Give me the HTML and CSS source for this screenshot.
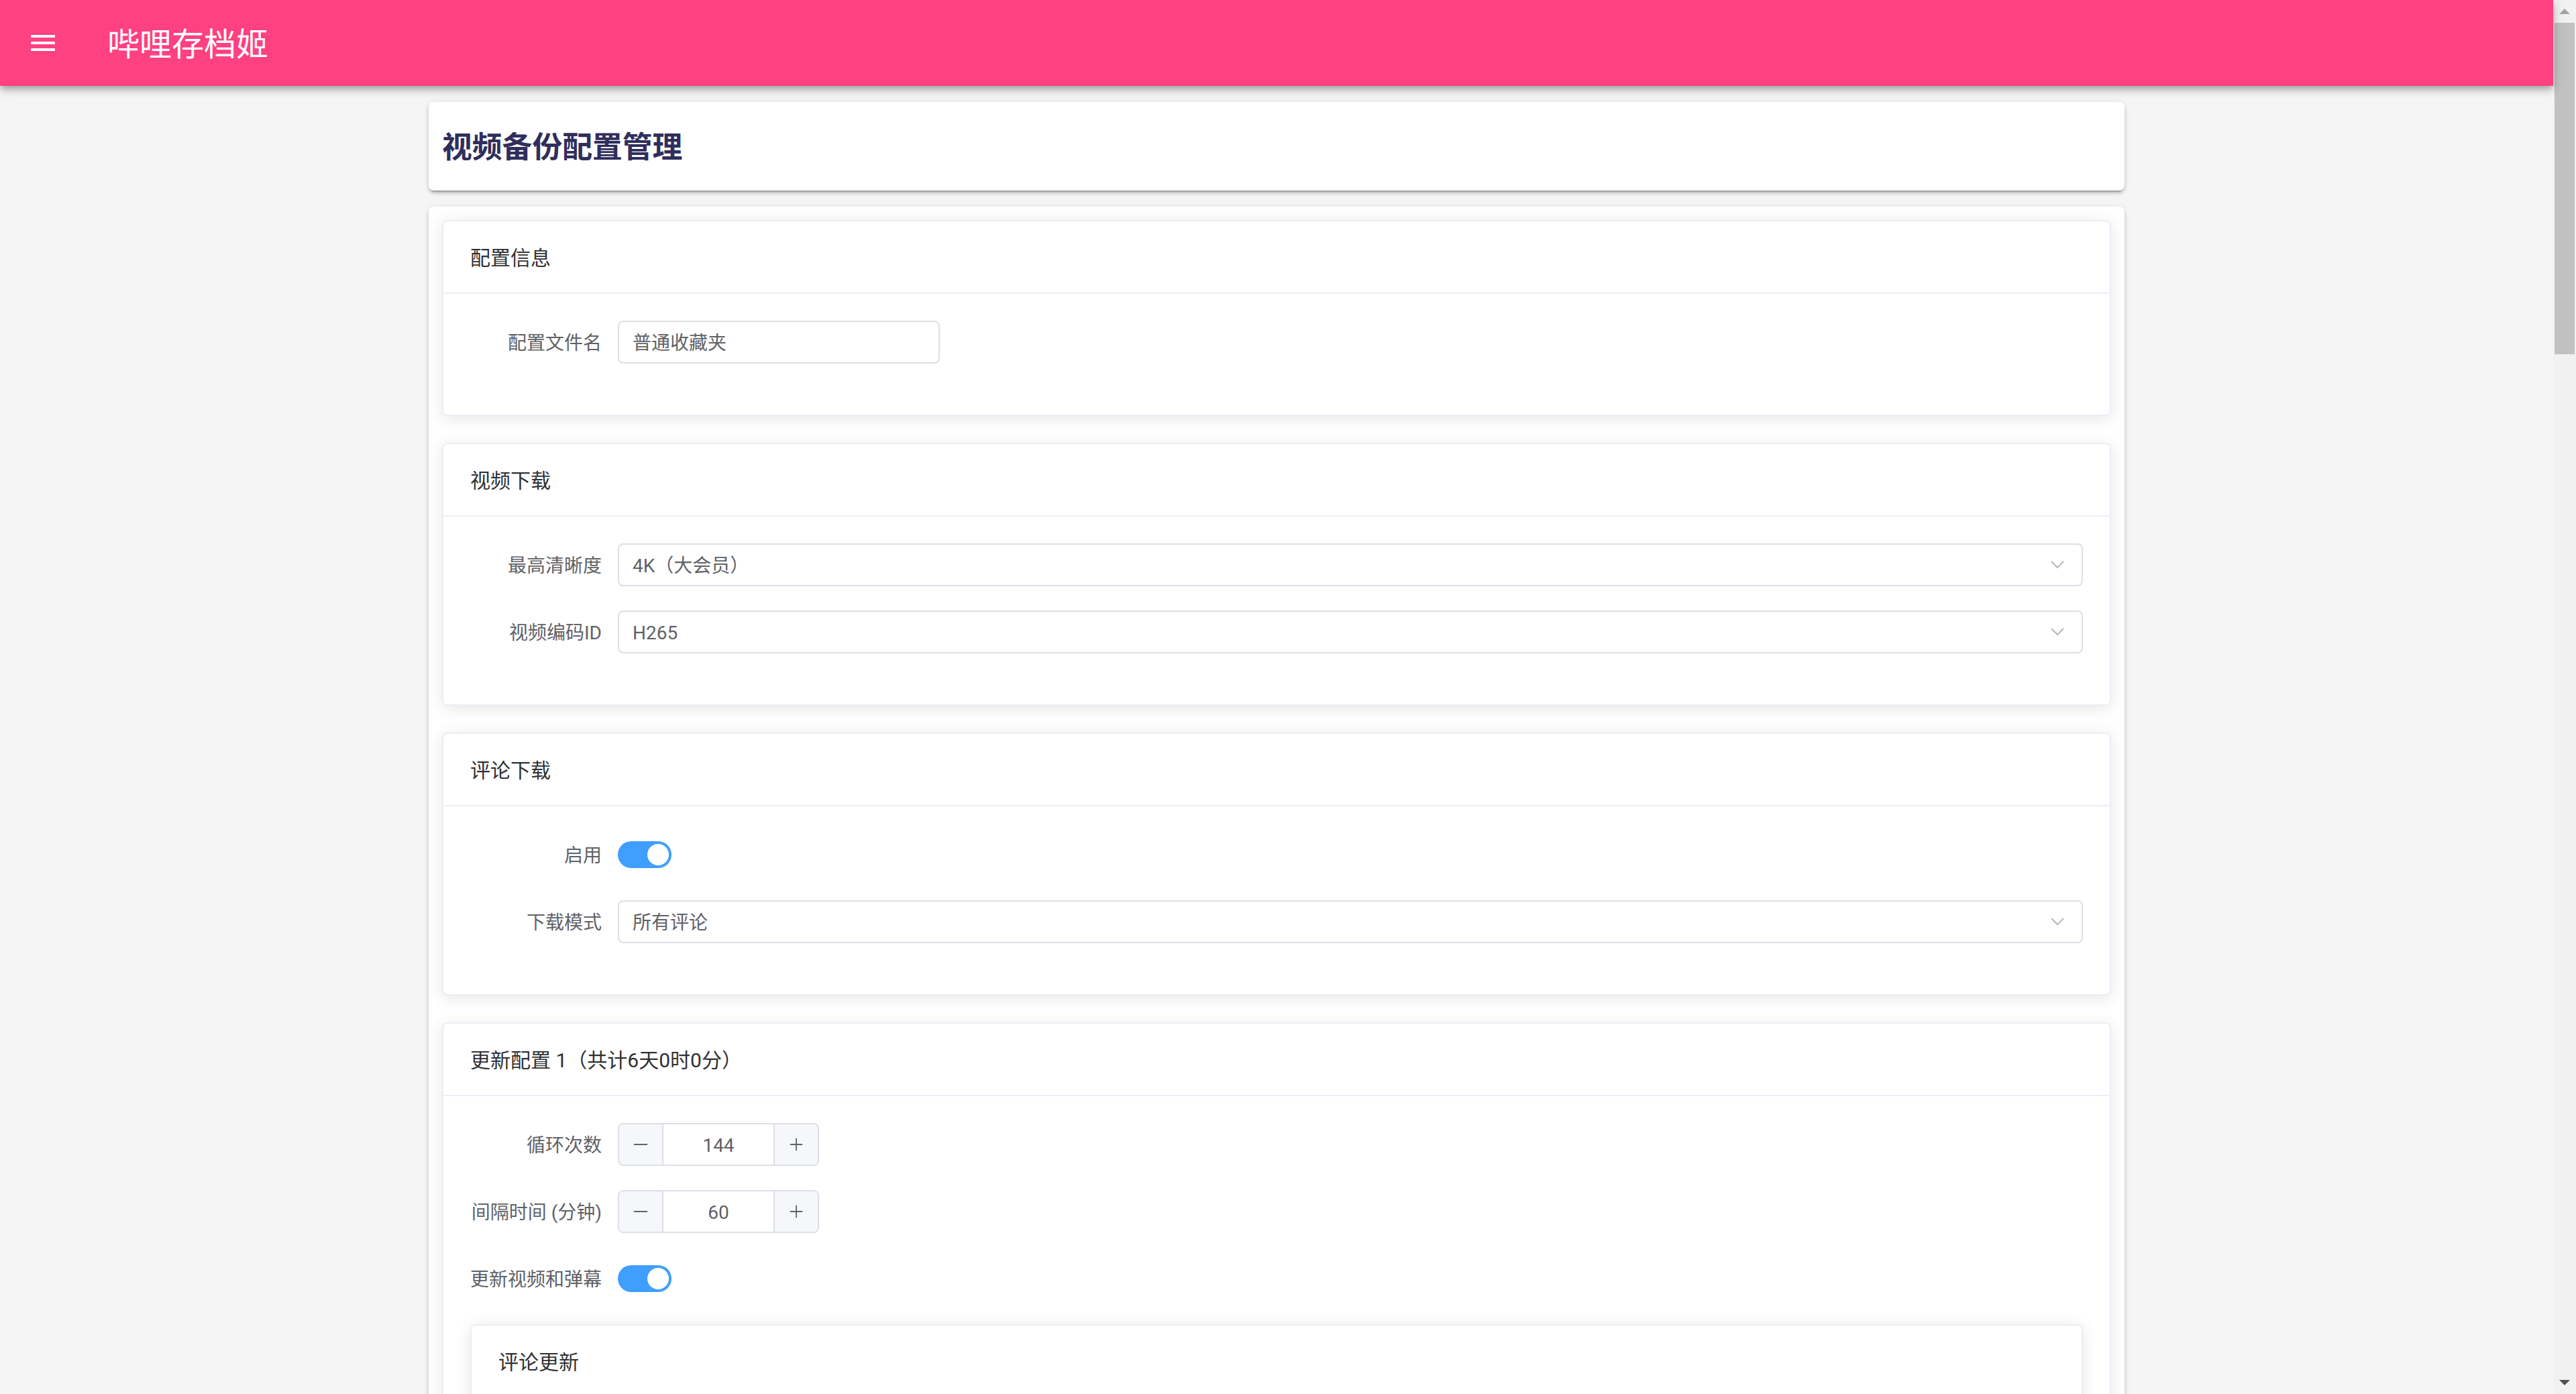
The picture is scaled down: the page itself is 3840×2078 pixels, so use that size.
FILE: index.html
```html
<!DOCTYPE html>
<html lang="zh-CN">
<head>
<meta charset="utf-8">
<title>哔哩存档姬</title>
<link rel="stylesheet" href="styles.css">
</head>
<body>
<div class="viewport">
  <div class="app">
    <header class="app-bar">
      <svg class="nav-icon" viewBox="0 0 24 24" aria-hidden="true"><path fill="currentColor" d="M3 18h18v-2H3v2zm0-5h18v-2H3v2zm0-7v2h18V6H3z"/></svg>
      <div class="app-title">哔哩存档姬</div>
    </header>
    <main class="main">
      <div class="container">
        <div class="title-card">
          <h2 class="page-title">视频备份配置管理</h2>
        </div>
        <div class="form-card">
          <section class="el-card">
            <div class="el-card-header">配置信息</div>
            <div class="el-card-body">
              <div class="form-item">
                <label class="form-label">配置文件名</label>
                <div class="input"><span class="field-text">普通收藏夹</span></div>
              </div>
            </div>
          </section>

          <section class="el-card">
            <div class="el-card-header">视频下载</div>
            <div class="el-card-body">
              <div class="form-item">
                <label class="form-label">最高清晰度</label>
                <div class="select"><span class="field-text">4K（大会员）</span><svg class="chevron" viewBox="0 0 10 6"><polyline points="0.5,0.5 5,5 9.5,0.5"/></svg></div>
              </div>
              <div class="form-item">
                <label class="form-label">视频编码ID</label>
                <div class="select"><span class="field-text">H265</span><svg class="chevron" viewBox="0 0 10 6"><polyline points="0.5,0.5 5,5 9.5,0.5"/></svg></div>
              </div>
            </div>
          </section>

          <section class="el-card">
            <div class="el-card-header">评论下载</div>
            <div class="el-card-body">
              <div class="form-item">
                <label class="form-label">启用</label>
                <span class="switch"><span class="switch-knob"></span></span>
              </div>
              <div class="form-item">
                <label class="form-label">下载模式</label>
                <div class="select"><span class="field-text">所有评论</span><svg class="chevron" viewBox="0 0 10 6"><polyline points="0.5,0.5 5,5 9.5,0.5"/></svg></div>
              </div>
            </div>
          </section>

          <section class="el-card">
            <div class="el-card-header">更新配置 1（共计6天0时0分）</div>
            <div class="el-card-body">
              <div class="form-item">
                <label class="form-label">循环次数</label>
                <div class="input-number">
                  <span class="in-btn dec"><svg viewBox="0 0 12 12"><line x1="0.5" y1="6" x2="11.5" y2="6"/></svg></span>
                  <span class="in-value">144</span>
                  <span class="in-btn inc"><svg viewBox="0 0 12 12"><line x1="1" y1="6" x2="11" y2="6"/><line x1="6" y1="1" x2="6" y2="11"/></svg></span>
                </div>
              </div>
              <div class="form-item">
                <label class="form-label">间隔时间 (分钟)</label>
                <div class="input-number">
                  <span class="in-btn dec"><svg viewBox="0 0 12 12"><line x1="0.5" y1="6" x2="11.5" y2="6"/></svg></span>
                  <span class="in-value">60</span>
                  <span class="in-btn inc"><svg viewBox="0 0 12 12"><line x1="1" y1="6" x2="11" y2="6"/><line x1="6" y1="1" x2="6" y2="11"/></svg></span>
                </div>
              </div>
              <div class="form-item">
                <label class="form-label">更新视频和弹幕</label>
                <span class="switch"><span class="switch-knob"></span></span>
              </div>
              <section class="el-card nested">
                <div class="el-card-header">评论更新</div>
                <div class="el-card-body"></div>
              </section>
            </div>
          </section>
        </div>
      </div>
    </main>
  </div>
  <div class="scrollbar">
    <div class="sb-btn sb-up"></div>
    <div class="sb-track"><div class="sb-thumb"></div></div>
    <div class="sb-btn sb-down"></div>
  </div>
</div>
</body>
</html>
```
FILE: styles.css
```css
* { box-sizing: border-box; }
html, body { margin: 0; padding: 0; }
body {
  overflow: hidden;
  background: #f5f5f5;
  font-family: Roboto, "Noto Sans CJK SC", sans-serif;
}
.viewport {
  zoom: 2;
  width: 1920px;
  height: 1039px;
  display: flex;
  overflow: hidden;
}
.app {
  flex: 1;
  min-width: 0;
  display: flex;
  flex-direction: column;
  background: #f5f5f5;
}
.app-bar {
  flex: none;
  height: 64px;
  background: #ff4081;
  display: flex;
  align-items: center;
  padding: 0 20px;
  position: relative;
  z-index: 2;
  box-shadow: 0 2px 4px -1px rgba(0,0,0,.2), 0 4px 5px 0 rgba(0,0,0,.14), 0 1px 10px 0 rgba(0,0,0,.12);
}
.nav-icon { width: 24px; height: 24px; display: block; color: #fff; flex: none; }
.app-title {
  margin-left: 36px;
  margin-bottom: 2px;
  font-family: "Noto Sans CJK SC", sans-serif;
  font-size: 24px;
  line-height: 1;
  color: #fff;
}
.main { flex: 1; min-height: 0; }
.container { max-width: 1264px; margin: 0 auto; padding-top: 12px; }
.title-card {
  height: 66px;
  padding: 0 10px 2px;
  display: flex;
  align-items: center;
  background: #fff;
  border-radius: 4px;
  box-shadow: 0 3px 1px -2px rgba(0,0,0,.2), 0 2px 2px 0 rgba(0,0,0,.14), 0 1px 5px 0 rgba(0,0,0,.12);
}
.page-title {
  margin: 0;
  font-family: "Noto Sans CJK SC", sans-serif;
  font-size: 22.4px;
  font-weight: 700;
  line-height: 1;
  color: #302e5c;
}
.form-card {
  margin-top: 12px;
  padding: 10px;
  background: #fff;
  border-radius: 4px;
  box-shadow: 0 3px 1px -2px rgba(0,0,0,.2), 0 2px 2px 0 rgba(0,0,0,.14), 0 1px 5px 0 rgba(0,0,0,.12);
}
.el-card {
  border: 1px solid #ebeef5;
  border-radius: 4px;
  background: #fff;
  box-shadow: 0 2px 12px 0 rgba(0,0,0,.1);
  margin-bottom: 20px;
  overflow: hidden;
}
.el-card-header {
  padding: 19px 20px 17px;
  line-height: 17px;
  font-size: 15px;
  color: #303133;
  border-bottom: 1px solid #ebeef5;
}
.el-card-body { padding: 20px; }
.form-item {
  display: flex;
  align-items: center;
  min-height: 32px;
  margin-bottom: 18px;
}
.form-label {
  flex: none;
  width: 110px;
  padding: 2px 12px 0 0;
  text-align: right;
  font-size: 14px;
  line-height: 30px;
  color: #606266;
  white-space: nowrap;
}
.input, .select {
  height: 32px;
  border: 1px solid #dcdfe6;
  border-radius: 4px;
  background: #fff;
  font-size: 14px;
  color: #606266;
  padding: 0 10px;
  display: flex;
  align-items: center;
}
.field-text {
  flex: 1;
  padding-top: 2px;
  line-height: 28px;
}
.input { width: 240px; }
.select { flex: 1; padding-right: 13px; }
.chevron {
  width: 10px;
  height: 6px;
  fill: none;
  stroke: #b4b7bd;
  stroke-width: 1;
}
.switch {
  width: 40px;
  height: 20px;
  border-radius: 10px;
  background: #409eff;
  display: flex;
  align-items: center;
  justify-content: flex-end;
  padding: 0 2px;
}
.switch-knob {
  width: 16px;
  height: 16px;
  border-radius: 50%;
  background: #fff;
}
.input-number {
  width: 150px;
  height: 32px;
  border: 1px solid #dcdfe6;
  border-radius: 4px;
  display: flex;
  overflow: hidden;
  background: #fff;
}
.in-btn {
  flex: none;
  width: 33px;
  background: #f5f7fa;
  display: flex;
  align-items: center;
  justify-content: center;
}
.in-btn svg {
  width: 11px;
  height: 11px;
  stroke: #606266;
  stroke-width: 1;
}
.dec { border-right: 1px solid #dcdfe6; }
.inc { border-left: 1px solid #dcdfe6; }
.in-value {
  flex: 1;
  text-align: center;
  font-size: 14px;
  padding-top: 2px;
  line-height: 28px;
  color: #606266;
}
.nested { margin-bottom: 0; }
.nested .el-card-body { height: 60px; }
.scrollbar {
  flex: none;
  width: 17px;
  background: #f1f1f1;
  display: flex;
  flex-direction: column;
}
.sb-btn {
  flex: none;
  height: 17px;
  display: flex;
  align-items: center;
  justify-content: center;
}
.sb-up::before {
  content: "";
  border-left: 4px solid transparent;
  border-right: 4px solid transparent;
  border-bottom: 4px solid #a3a3a3;
}
.sb-down::before {
  content: "";
  border-left: 4px solid transparent;
  border-right: 4px solid transparent;
  border-top: 4px solid #505050;
}
.sb-track { flex: 1; padding: 0 1px; }
.sb-thumb { height: 247px; background: #c1c1c1; }
```
